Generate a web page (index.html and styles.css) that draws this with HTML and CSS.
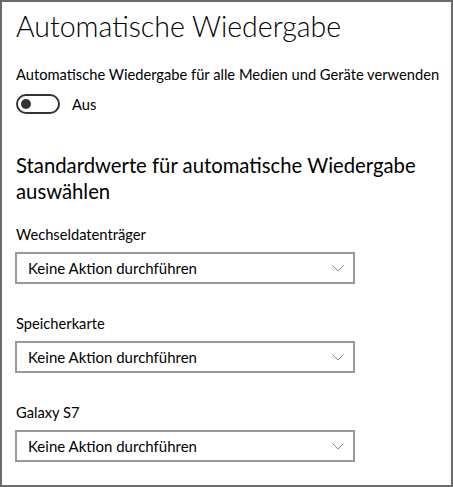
FILE: index.html
```html
<!DOCTYPE html>
<html lang="de">
<head>
    <meta charset="UTF-8">
    <title>Automatische Wiedergabe</title>
    <link rel="stylesheet" href="styles.css">
</head>
<body>
    <div class="frame">
        <h1 class="title">Automatische Wiedergabe</h1>

        <p class="label">Automatische Wiedergabe für alle Medien und Geräte verwenden</p>
        <div class="toggle-row">
            <span class="toggle"><span class="knob"></span></span>
            <span class="toggle-text">Aus</span>
        </div>

        <h2 class="section">Standardwerte für automatische Wiedergabe auswählen</h2>

        <div class="field">
            <p class="label">Wechseldatenträger</p>
            <div class="dropdown">
                <span>Keine Aktion durchführen</span>
                <svg class="chevron" width="12" height="7" viewBox="0 0 12 7"><path d="M0.5 0.5 L6 6 L11.5 0.5" fill="none" stroke="#8a8a8a" stroke-width="1"/></svg>
            </div>
        </div>

        <div class="field">
            <p class="label">Speicherkarte</p>
            <div class="dropdown">
                <span>Keine Aktion durchführen</span>
                <svg class="chevron" width="12" height="7" viewBox="0 0 12 7"><path d="M0.5 0.5 L6 6 L11.5 0.5" fill="none" stroke="#8a8a8a" stroke-width="1"/></svg>
            </div>
        </div>

        <div class="field">
            <p class="label">Galaxy S7</p>
            <div class="dropdown">
                <span>Keine Aktion durchführen</span>
                <svg class="chevron" width="12" height="7" viewBox="0 0 12 7"><path d="M0.5 0.5 L6 6 L11.5 0.5" fill="none" stroke="#8a8a8a" stroke-width="1"/></svg>
            </div>
        </div>
    </div>
</body>
</html>
```

FILE: styles.css
```css
body {
    margin: 0;
    font-family: Lato, 'Open Sans', sans-serif;
    color: #000;
    background: #fff;
}

.frame {
    box-sizing: border-box;
    width: 453px;
    height: 487px;
    border: 2px solid #6b6b6b;
    padding: 0 13px;
}

.title {
    margin: 6px 0 0 1px;
    font-size: 28.5px;
    font-weight: 300;
    line-height: 36px;
}

.label {
    margin: 0 0 0 1px;
    font-size: 14.7px;
    line-height: 20px;
    white-space: nowrap;
}

.title + .label {
    margin-top: 20px;
}

.toggle-row {
    display: flex;
    align-items: center;
    margin: 10px 0 0 1px;
    height: 20px;
}

.toggle {
    box-sizing: border-box;
    width: 44px;
    height: 20px;
    border: 2px solid #333;
    border-radius: 10px;
    display: flex;
    align-items: center;
    padding-left: 3px;
}

.knob {
    width: 10px;
    height: 10px;
    border-radius: 50%;
    background: #333;
}

.toggle-text {
    margin-left: 12px;
    font-size: 14.7px;
}

.section {
    margin: 38px 0 0 1px;
    font-size: 20.3px;
    font-weight: 400;
    line-height: 26px;
}

.field {
    margin-top: 20px;
}

.field + .field {
    margin-top: 29px;
}

.dropdown {
    box-sizing: border-box;
    width: 340px;
    height: 32px;
    margin-top: 8px;
    border: 2px solid #999;
    display: flex;
    align-items: center;
    justify-content: space-between;
    padding: 0 9px 0 11px;
    font-size: 15px;
}
```
